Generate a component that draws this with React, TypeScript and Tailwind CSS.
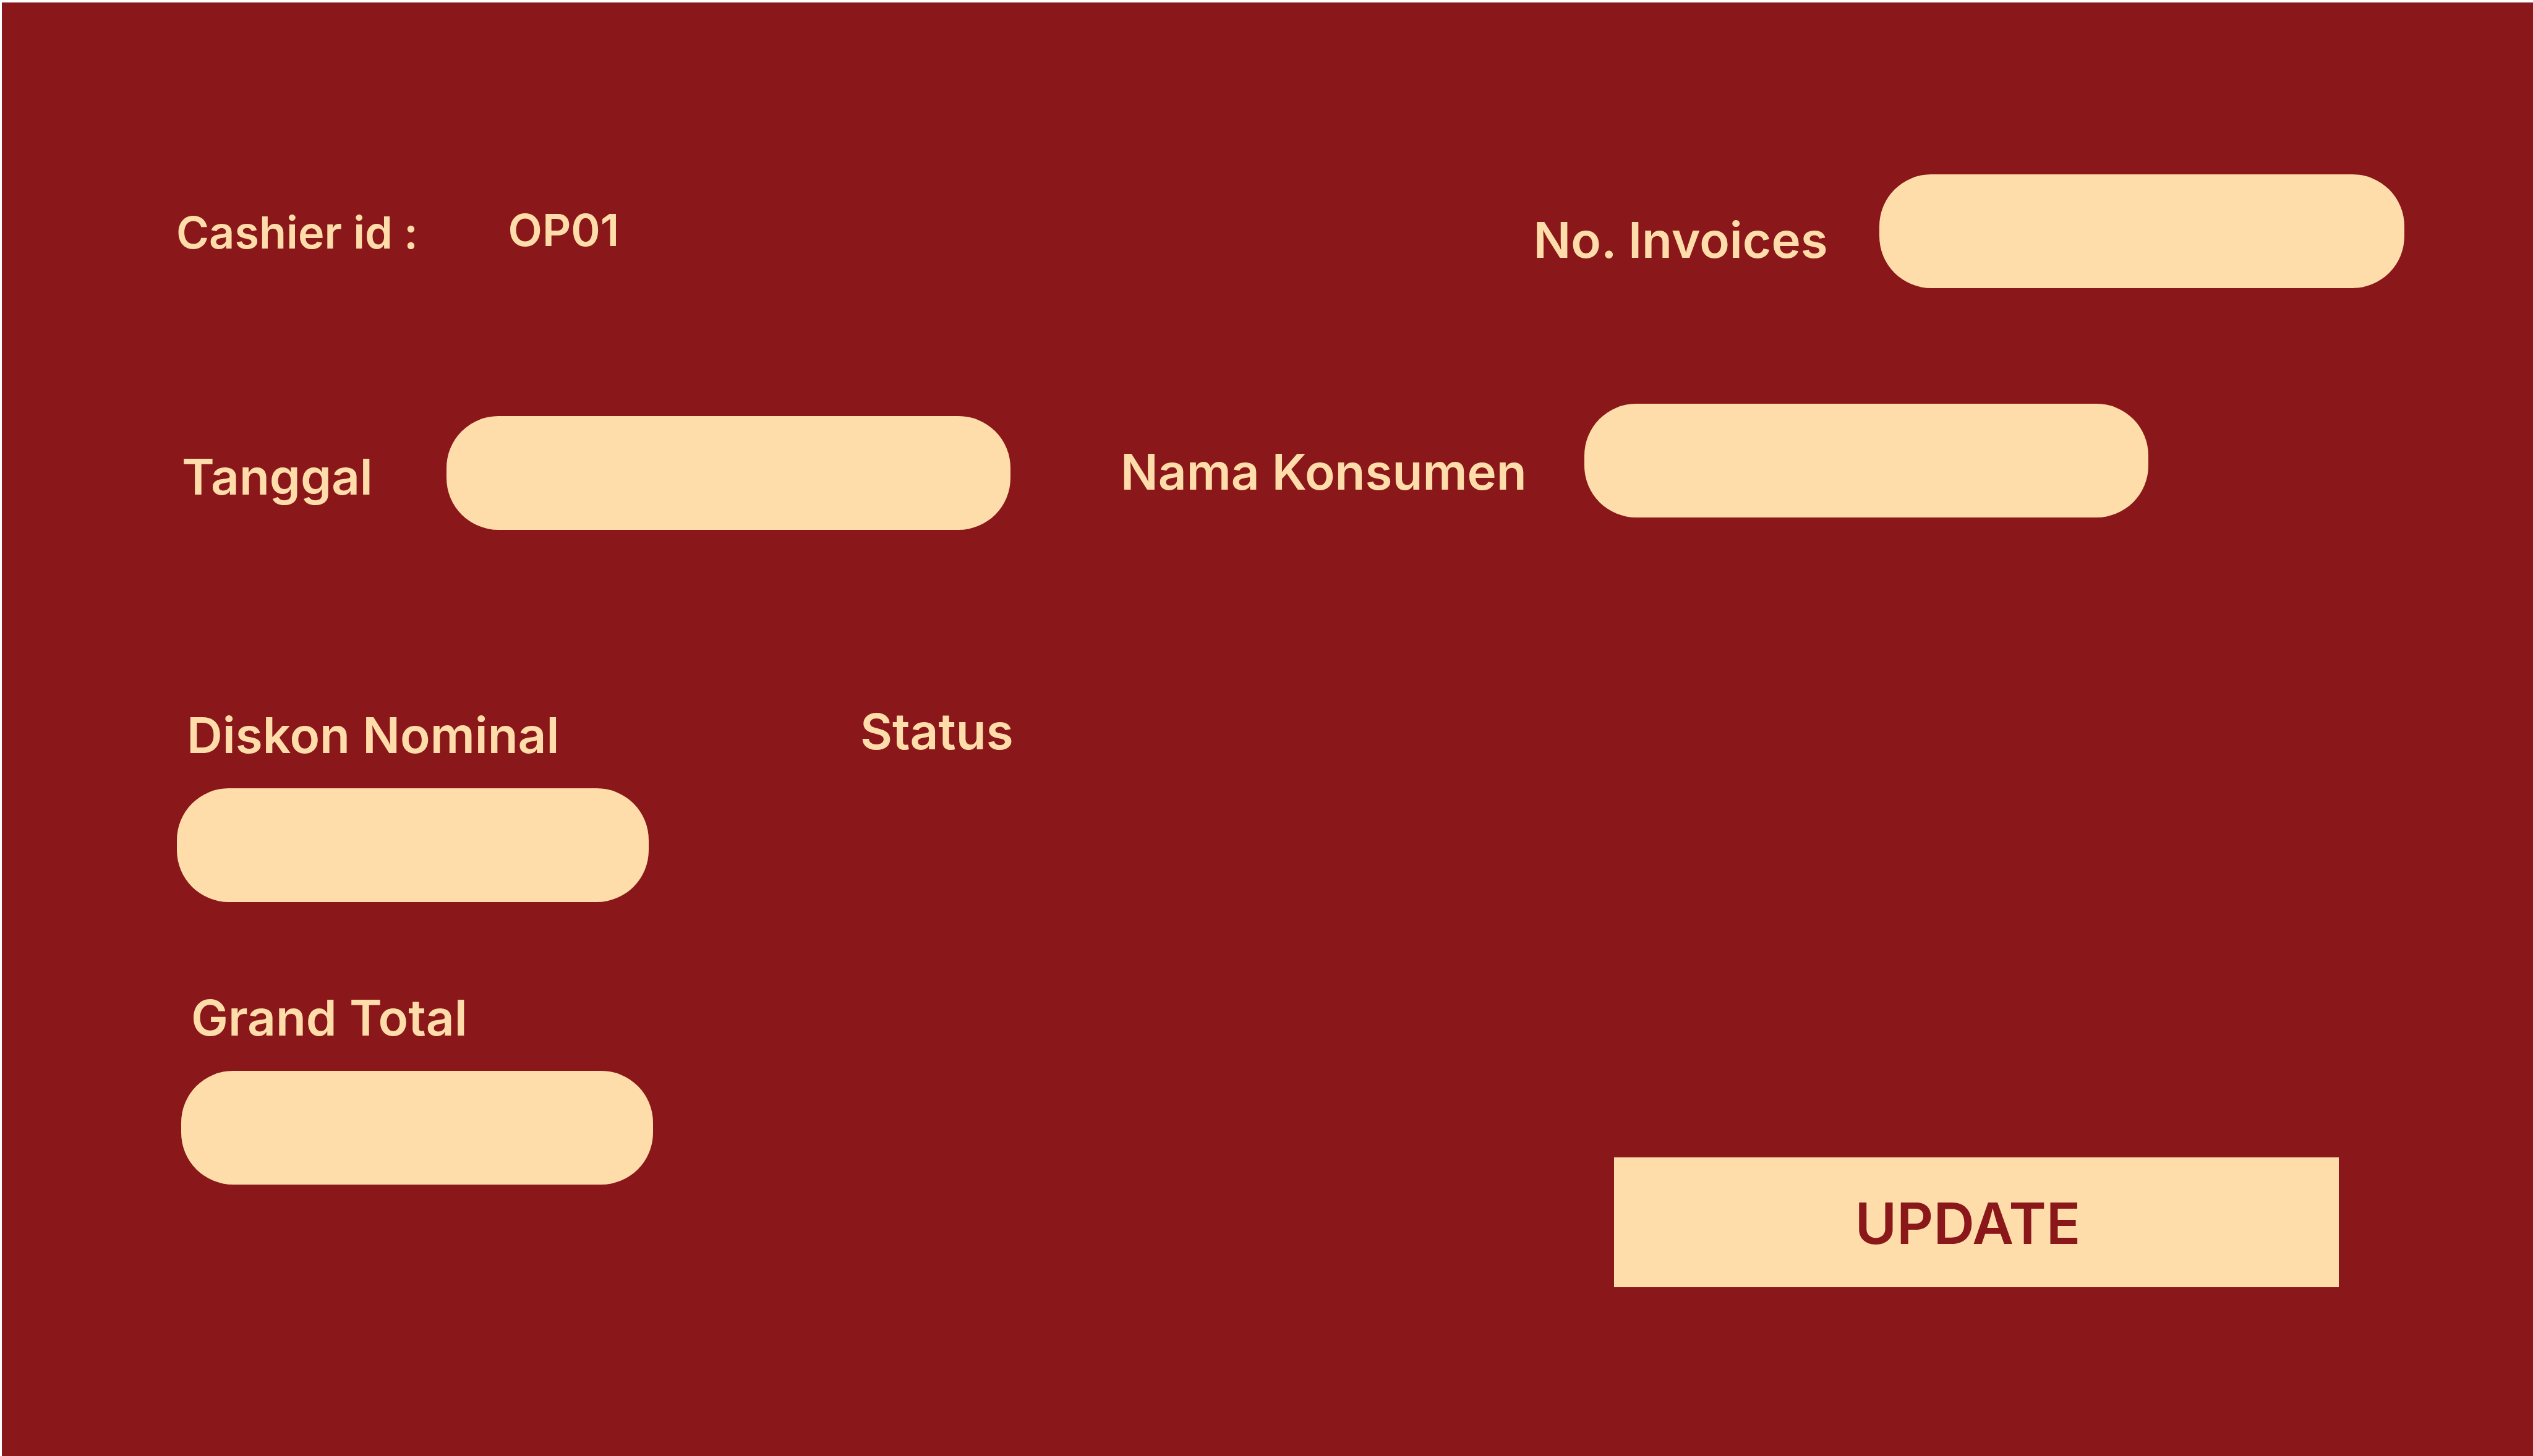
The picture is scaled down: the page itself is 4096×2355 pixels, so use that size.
import React from "react";

const label = "block whitespace-nowrap text-[80px] leading-[76px] font-semibold";
const small = "block whitespace-nowrap text-[72px] leading-[68px] font-semibold";
const field =
  "block h-46 w-full min-w-0 rounded-[84px] bg-[#ffddab] px-16 text-[80px] font-semibold text-[#8a171a] outline-none";

export default function App() {
  return (
    <main className="min-h-screen border-t-4 border-l-[3px] border-white bg-[#8a171a] font-['Inter',sans-serif] text-[#ffddab]">
      <form onSubmit={(e) => e.preventDefault()}>
        <div className="grid grid-cols-[536fr_1656fr_559fr_848fr] items-start pt-[278px] pr-52 pl-[282px]">
          <span className={`${small} mt-15`}>Cashier id :</span>
          <output className={`${small} mt-14`}>OP01</output>
          <label htmlFor="invoice" className={`${label} mt-17`}>No. Invoices</label>
          <input id="invoice" type="text" className={field} />
        </div>

        <div className="grid grid-cols-[428fr_912fr_178fr_750fr_912fr] items-start pt-[187px] pr-[622px] pl-[291px]">
          <label htmlFor="date" className={`${label} mt-20`}>Tanggal</label>
          <div className="pt-5">
            <input id="date" type="text" className={field} />
          </div>
          <span />
          <label htmlFor="customer" className={`${label} mt-18`}>Nama Konsumen</label>
          <input id="customer" type="text" className={field} />
        </div>

        <div className="grid grid-cols-[769fr_335fr_1218fr_1171fr] pt-72 pr-[314px] pl-[283px]">
          <div className="flex flex-col gap-[149px] pt-1.5">
            <div className="flex flex-col gap-12 pr-[7px]">
              <label htmlFor="discount" className={`${label} pl-4`}>Diskon Nominal</label>
              <input id="discount" type="text" className={field} />
            </div>
            <div className="flex flex-col gap-12 pl-[7px]">
              <label htmlFor="total" className={`${label} pl-4`}>Grand Total</label>
              <input id="total" type="text" className={field} />
            </div>
          </div>
          <span />
          <h2 className={label}>Status</h2>
          <button
            type="submit"
            className="mt-[727px] h-[210px] bg-[#ffddab] pt-1 pr-7 text-[92px] leading-none font-semibold text-[#8a171a]"
          >
            UPDATE
          </button>
        </div>
      </form>
    </main>
  );
}
